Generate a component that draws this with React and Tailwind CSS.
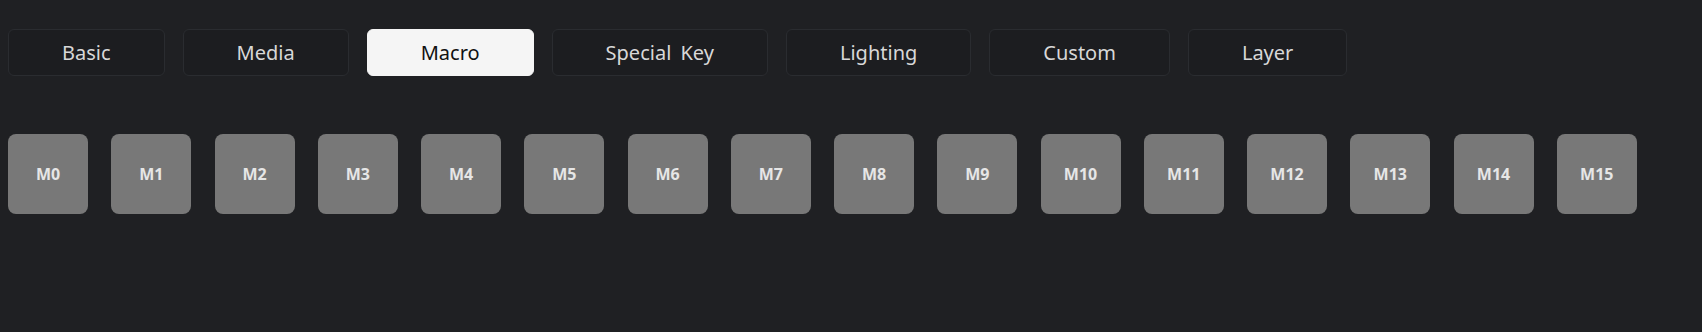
import { useState } from 'react';

const tabs = ['Basic', 'Media', 'Macro', 'Special Key', 'Lighting', 'Custom', 'Layer'];
const macros = Array.from({ length: 16 }, (_, i) => `M${i}`);

export default function App() {
    const [active, setActive] = useState('Macro');

    return (
        <div className="w-[1702px] h-[332px] bg-[#1f2023] pl-[8px] pt-[29px]" style={{ fontFamily: '"Noto Sans", "Open Sans", sans-serif' }}>
            <div className="flex gap-[18px]">
                {tabs.map(t => (
                    <button
                        key={t}
                        onClick={() => setActive(t)}
                        className={`h-[47px] px-[53px] rounded-[6px] text-[20px] leading-none border [word-spacing:4px] ${active === t ? 'bg-[#f5f5f5] text-[#111111] border-[#f5f5f5]' : 'bg-[#1c1d20] text-[#d8d8d8] border-[#2a2c30]'}`}
                    >
                        {t}
                    </button>
                ))}
            </div>

            <div className="flex gap-[23.25px] mt-[58px]">
                {macros.map(m => (
                    <div key={m} className="w-[80px] h-[80px] rounded-[8px] bg-[#787878] flex items-center justify-center text-[16px] font-bold text-[#e6e6e6]">
                        {m}
                    </div>
                ))}
            </div>
        </div>
    );
}
